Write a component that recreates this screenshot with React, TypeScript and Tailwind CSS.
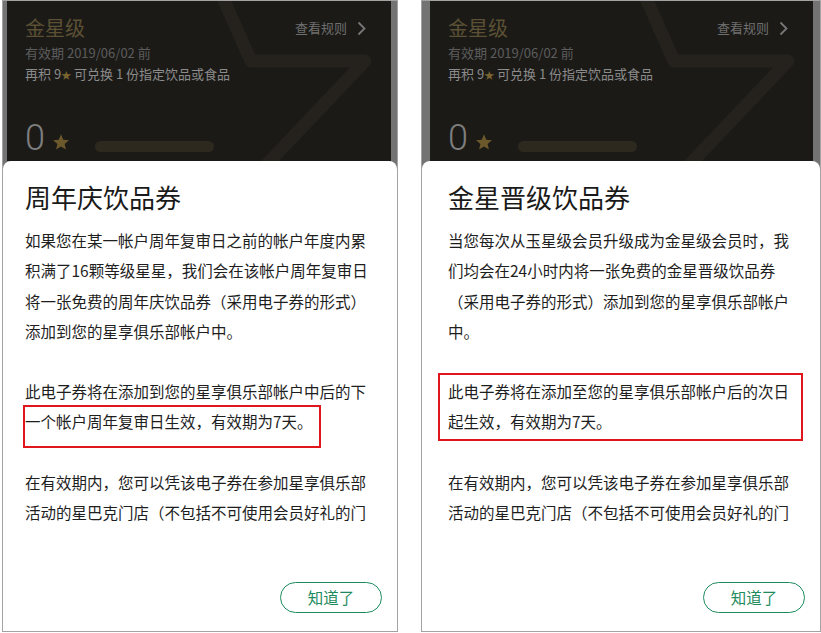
import React from "react";

const CJK = "font-['Noto_Sans_CJK_SC','Noto_Sans',sans-serif]";

type PanelProps = {
  width: number;
  cardMl: number;
  cardMr: number;
  title: string;
  paragraphs: string[][];
  box: { left: number; top: number; width: number; height: number };
};

const GoldStar = ({ size, color }: { size: number; color: string }) => (
  <svg width={size} height={size} viewBox="0 0 24 24">
    <path
      d="M12 1.8l3 7.1 7.6.6-5.8 5 1.8 7.5L12 18l-6.6 4 1.8-7.5-5.8-5 7.6-.6z"
      fill={color}
    />
  </svg>
);

const MemberCard = () => (
  <div className="relative h-full overflow-hidden bg-[#1b1a17]">
    {/* faint big star outline */}
    <svg className="absolute inset-0 h-full w-full">
      <polyline
        points="212,-12 244,60 358,60 246,178"
        fill="none"
        stroke="#25221d"
        strokeWidth="13"
        strokeLinejoin="round"
        strokeLinecap="round"
      />
    </svg>
    <div className="relative px-[18px] pt-[13px]">
      <div className="flex items-center justify-between">
        <span className="text-[20px] leading-[28px] text-[#5c5134]">金星级</span>
        <span className="flex items-center gap-[10px] pr-[7px] text-[13px] leading-[28px] text-[#6f6f6f]">
          查看规则
          <svg width="9" height="15" viewBox="0 0 9 15">
            <path d="M1.5 1.5l6 6-6 6" fill="none" stroke="#777" strokeWidth="1.8" />
          </svg>
        </span>
      </div>
      <div className="text-[13px] leading-[21px] text-[#5d5d5d]">有效期 2019/06/02 前</div>
      <div className="text-[13px] leading-[21px] text-[#8b8b8b]">
        再积 9<span className="text-[10px] text-[#7a6531]">★</span> 可兑换 1 份指定饮品或食品
      </div>
      <div className="mt-[35px] flex items-end">
        <span className="font-['Roboto',sans-serif] text-[36px] font-light leading-none text-[#7e7e7e]">0</span>
        <span className="mb-[5px] ml-[7px]">
          <GoldStar size={18} color="#6b592c" />
        </span>
        <span className="mb-[4px] ml-[25px] h-[11px] w-[119px] rounded-full bg-[#2d291f]" />
      </div>
    </div>
  </div>
);

const Panel = ({ width, cardMl, cardMr, title, paragraphs, box }: PanelProps) => (
  <div
    className="relative flex h-[632px] flex-col border border-[#a3a3a3] bg-[#737373]"
    style={{ width }}
  >
    <div className="h-[160px]" style={{ marginLeft: cardMl, marginRight: cardMr }}>
      <MemberCard />
    </div>
    <div className="flex flex-1 flex-col rounded-t-[8px] bg-white" style={{ paddingLeft: cardMl + 18 }}>
      <h2 className="pt-[18px] text-[26px] leading-[36px] font-normal text-[#1a1a1a]">{title}</h2>
      <div className="mt-[10px] flex h-[304px] flex-col gap-[30px] overflow-hidden text-[15.5px] leading-[30.3px] text-[#1e1e1e]">
        {paragraphs.map((lines, i) => (
          <p key={i}>
            {lines.map((l, j) => (
              <span key={j} className="block whitespace-nowrap">
                {l}
              </span>
            ))}
          </p>
        ))}
      </div>
      <div className="mt-auto flex justify-end pr-[15px] pb-[18px]">
        <button className="h-[31px] w-[102px] rounded-full border-[1.5px] border-[#1e8b5e] text-[15.5px] text-[#1e8b5e]">
          知道了
        </button>
      </div>
    </div>
    {/* red annotation */}
    <div
      className="absolute border-[2.5px] border-[#e0161c]"
      style={{ left: box.left, top: box.top, width: box.width, height: box.height }}
    />
  </div>
);

export default function App() {
  return (
    <div className={`flex h-[633px] w-[821px] gap-[23px] bg-white pl-[2px] ${CJK}`}>
      <Panel
        width={396}
        cardMl={4}
        cardMr={6}
        title="周年庆饮品券"
        paragraphs={[
          [
            "如果您在某一帐户周年复审日之前的帐户年度内累",
            "积满了16颗等级星星，我们会在该帐户周年复审日",
            "将一张免费的周年庆饮品券（采用电子券的形式）",
            "添加到您的星享俱乐部帐户中。",
          ],
          ["此电子券将在添加到您的星享俱乐部帐户中后的下", "一个帐户周年复审日生效，有效期为7天。"],
          ["在有效期内，您可以凭该电子券在参加星享俱乐部", "活动的星巴克门店（不包括不可使用会员好礼的门"],
        ]}
        box={{ left: 20, top: 404, width: 298, height: 43 }}
      />
      <Panel
        width={400}
        cardMl={8}
        cardMr={7}
        title="金星晋级饮品券"
        paragraphs={[
          [
            "当您每次从玉星级会员升级成为金星级会员时，我",
            "们均会在24小时内将一张免费的金星晋级饮品券",
            "（采用电子券的形式）添加到您的星享俱乐部帐户",
            "中。",
          ],
          ["此电子券将在添加至您的星享俱乐部帐户后的次日", "起生效，有效期为7天。"],
          ["在有效期内，您可以凭该电子券在参加星享俱乐部", "活动的星巴克门店（不包括不可使用会员好礼的门"],
        ]}
        box={{ left: 16, top: 372, width: 365, height: 68 }}
      />
    </div>
  );
}
